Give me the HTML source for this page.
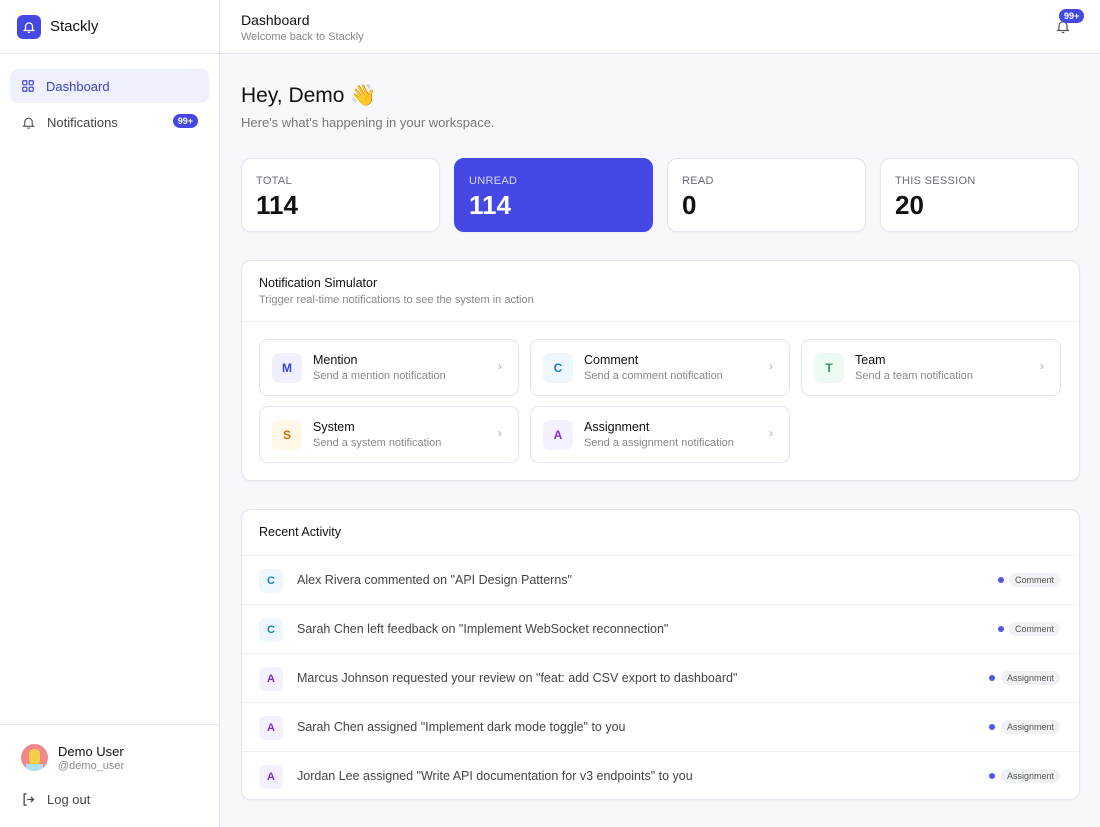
<!DOCTYPE html>
<html><head><meta charset="utf-8"><style>
*{box-sizing:border-box;margin:0;padding:0}
body{width:1100px;height:827px;font-family:"Liberation Sans",sans-serif;background:#f8f8fc;color:#111;position:relative;overflow:hidden}
.side{position:absolute;left:0;top:0;width:220px;height:827px;background:#fff;border-right:1px solid #e6e7ee}
.logo{height:54px;border-bottom:1px solid #e6e7ee;display:flex;align-items:center;padding-left:17px}
.logo .ic{width:24px;height:24px;border-radius:6px;background:#4548e4;display:flex;align-items:center;justify-content:center}
.logo span{margin-left:9px;font-size:15px}
.nav{position:absolute;left:10px;width:199px;height:34px;border-radius:8px;display:flex;align-items:center;padding-left:11px;font-size:13px;color:#444}
.nav span{margin-left:11px}
.badge{background:#4548e4;color:#fff;font-size:9px;font-weight:bold;border-radius:9px;padding:2px 5px}
.top{position:absolute;left:220px;top:0;right:0;height:54px;background:#fff;border-bottom:1px solid #e6e7ee}
.card{position:absolute;background:#fff;border:1px solid #e4e5ee;border-radius:10px;box-shadow:0 1px 2px rgba(0,0,0,.04)}
.stat .l{position:absolute;left:14px;top:16px;font-size:11px;color:#666b80;letter-spacing:.3px}
.stat .v{position:absolute;left:14px;top:31px;font-size:26px;font-weight:bold}
.btn{position:absolute;width:260px;height:57px;border:1px solid #e4e5ee;border-radius:9px;background:#fff}
.btn .b{position:absolute;left:12px;top:13px;width:30px;height:30px;border-radius:7px;display:flex;align-items:center;justify-content:center;font-size:12px;font-weight:bold}
.btn .t{position:absolute;left:53px;top:13px;font-size:12.5px}
.btn .s{position:absolute;left:53px;top:30px;font-size:11px;color:#888}
.btn .c{position:absolute;right:16px;top:19px;color:#aaa;font-size:12px}
.row{position:absolute;left:0;right:0;height:49px;border-top:1px solid #eef0f4}
.row .b{position:absolute;left:17px;top:13px;width:24px;height:24px;border-radius:6px;display:flex;align-items:center;justify-content:center;font-size:11px;font-weight:bold}
.row .t{position:absolute;left:55px;top:17px;font-size:12.5px;color:#444}
.row .tag{position:absolute;right:19px;top:17px;font-size:9px;color:#555;background:#f0f1f5;border-radius:8px;padding:2px 6px}
.row .dot{position:absolute;top:21px;width:6px;height:6px;border-radius:50%;background:#5155e8}
</style></head><body>
<div class="side">
 <div class="logo"><div class="ic"><svg width="14" height="14" viewBox="0 0 24 24" fill="none" stroke="#fff" stroke-width="2.2"><path d="M6 16V11a6 6 0 0 1 12 0v5l2 2H4z"/><path d="M10 21h4"/></svg></div><span>Stackly</span></div>
 <div class="nav" style="top:69px;background:#eff0fd;color:#3c3fce"><svg width="14" height="14" viewBox="0 0 24 24" fill="none" stroke="#3c3fce" stroke-width="2"><rect x="3" y="3" width="7" height="7" rx="1"/><rect x="14" y="3" width="7" height="7" rx="1"/><rect x="3" y="14" width="7" height="7" rx="1"/><rect x="14" y="14" width="7" height="7" rx="1"/></svg><span>Dashboard</span></div>
 <div class="nav" style="top:105px"><svg width="15" height="15" viewBox="0 0 24 24" fill="none" stroke="#555" stroke-width="1.8"><path d="M6 16V11a6 6 0 0 1 12 0v5l2 2H4z"/><path d="M10 21h4"/></svg><span>Notifications</span><div class="badge" style="position:absolute;right:11px;top:9px">99+</div></div>
 <div style="position:absolute;left:0;right:0;top:724px;border-top:1px solid #e6e7ee"></div>
 <div style="position:absolute;left:21px;top:744px;width:27px;height:27px;border-radius:50%;background:#ee8a8a;overflow:hidden"><div style="position:absolute;left:8px;top:5px;width:11px;height:16px;border-radius:5px;background:#f5cf45"></div><div style="position:absolute;left:5px;top:20px;width:17px;height:8px;background:#aee0f0"></div></div>
 <div style="position:absolute;left:58px;top:744px;font-size:13px">Demo User</div>
 <div style="position:absolute;left:58px;top:760px;font-size:11px;color:#888">@demo_user</div>
 <svg style="position:absolute;left:21px;top:792px" width="15" height="15" viewBox="0 0 24 24" fill="none" stroke="#444" stroke-width="2"><path d="M9 3H5v18h4"/><path d="M10 12h10M16 8l4 4-4 4"/></svg>
 <div style="position:absolute;left:47px;top:792px;font-size:13px;color:#444">Log out</div>
</div>
<div class="top">
 <div style="position:absolute;left:21px;top:12px;font-size:14px">Dashboard</div>
 <div style="position:absolute;left:21px;top:31px;font-size:11px;color:#888">Welcome back to Stackly</div>
 <svg style="position:absolute;left:835px;top:18px" width="16" height="17" viewBox="0 0 24 24" fill="none" stroke="#555" stroke-width="1.8"><path d="M6 16V11a6 6 0 0 1 12 0v5l2 2H4z"/><path d="M10 21h4"/></svg>
 <div class="badge" style="position:absolute;left:839px;top:9px">99+</div>
</div>
<div style="position:absolute;left:241px;top:84px;font-size:21px">Hey, Demo 👋</div>
<div style="position:absolute;left:241px;top:115px;font-size:13px;color:#777">Here's what's happening in your workspace.</div>
<div class="card stat" style="left:241px;top:158px;width:199px;height:74px"><div class="l">TOTAL</div><div class="v">114</div></div>
<div class="card stat" style="left:454px;top:158px;width:199px;height:74px;background:#4548e4;border-color:#4548e4"><div class="l" style="color:#d5d7ff">UNREAD</div><div class="v" style="color:#fff">114</div></div>
<div class="card stat" style="left:667px;top:158px;width:199px;height:74px"><div class="l">READ</div><div class="v">0</div></div>
<div class="card stat" style="left:880px;top:158px;width:199px;height:74px"><div class="l">THIS SESSION</div><div class="v">20</div></div>
<div class="card" style="left:241px;top:260px;width:839px;height:221px">
 <div style="position:absolute;left:17px;top:15px;font-size:12.5px">Notification Simulator</div>
 <div style="position:absolute;left:17px;top:33px;font-size:11px;color:#888">Trigger real-time notifications to see the system in action</div>
 <div style="position:absolute;left:0;right:0;top:60px;border-top:1px solid #eef0f4"></div>
 <div class="btn" style="left:17px;top:78px"><div class="b" style="background:#eef0fe;color:#3c3fce">M</div><div class="t">Mention</div><div class="s">Send a mention notification</div><div class="c">›</div></div>
 <div class="btn" style="left:288px;top:78px"><div class="b" style="background:#eef7fe;color:#1a7fc4">C</div><div class="t">Comment</div><div class="s">Send a comment notification</div><div class="c">›</div></div>
 <div class="btn" style="left:559px;top:78px"><div class="b" style="background:#edfaf2;color:#2a9a5a">T</div><div class="t">Team</div><div class="s">Send a team notification</div><div class="c">›</div></div>
 <div class="btn" style="left:17px;top:145px"><div class="b" style="background:#fff8e8;color:#d06a10">S</div><div class="t">System</div><div class="s">Send a system notification</div><div class="c">›</div></div>
 <div class="btn" style="left:288px;top:145px"><div class="b" style="background:#f5f0fe;color:#7a2ed8">A</div><div class="t">Assignment</div><div class="s">Send a assignment notification</div><div class="c">›</div></div>
</div>
<div class="card" style="left:241px;top:509px;width:839px;height:291px">
 <div style="position:absolute;left:17px;top:15px;font-size:12.5px">Recent Activity</div>
 <div class="row" style="top:45px"><div class="b" style="background:#eef7fe;color:#1a7fc4">C</div><div class="t">Alex Rivera commented on "API Design Patterns"</div><div class="dot" style="right:75px"></div><div class="tag">Comment</div></div>
 <div class="row" style="top:94px"><div class="b" style="background:#eef7fe;color:#1a7fc4">C</div><div class="t">Sarah Chen left feedback on "Implement WebSocket reconnection"</div><div class="dot" style="right:75px"></div><div class="tag">Comment</div></div>
 <div class="row" style="top:143px"><div class="b" style="background:#f5f0fe;color:#7a2ed8">A</div><div class="t">Marcus Johnson requested your review on "feat: add CSV export to dashboard"</div><div class="dot" style="right:84px"></div><div class="tag">Assignment</div></div>
 <div class="row" style="top:192px"><div class="b" style="background:#f5f0fe;color:#7a2ed8">A</div><div class="t">Sarah Chen assigned "Implement dark mode toggle" to you</div><div class="dot" style="right:84px"></div><div class="tag">Assignment</div></div>
 <div class="row" style="top:241px"><div class="b" style="background:#f5f0fe;color:#7a2ed8">A</div><div class="t">Jordan Lee assigned "Write API documentation for v3 endpoints" to you</div><div class="dot" style="right:84px"></div><div class="tag">Assignment</div></div>
</div>
</body></html>
